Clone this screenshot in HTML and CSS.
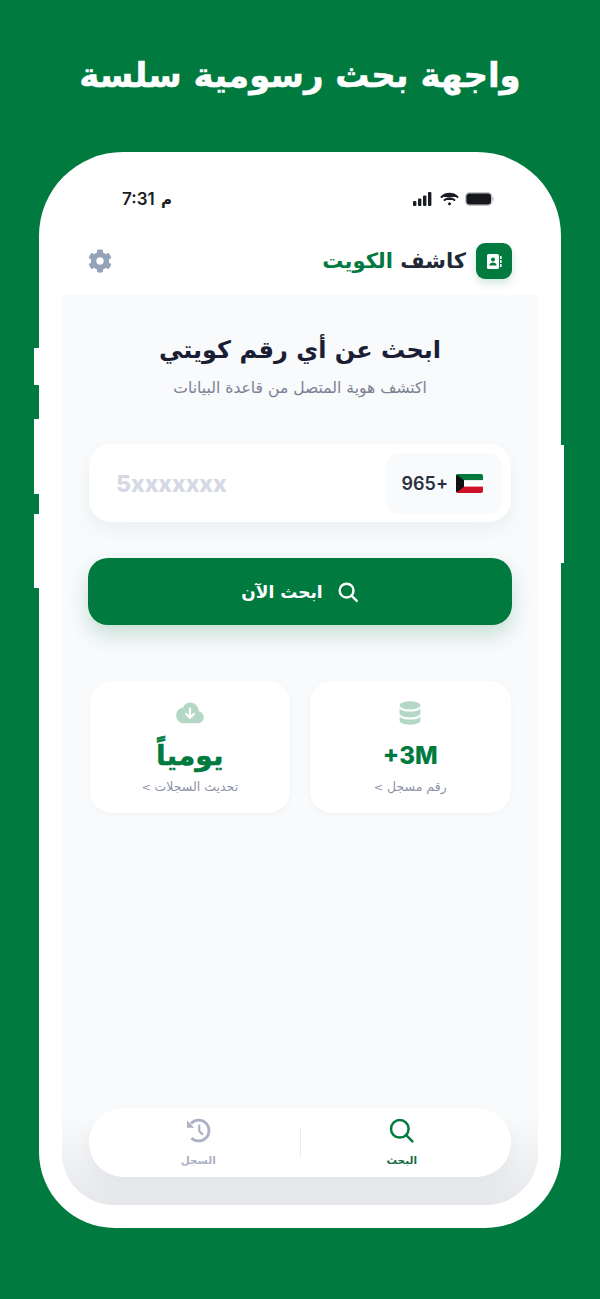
FILE: index.html
```html
<!DOCTYPE html>
<html lang="ar" dir="rtl">
<head>
    <meta charset="utf-8">
    <meta name="viewport" content="width=device-width, initial-scale=1.0">
    <title>كاشف الكويت</title>
    <link rel="stylesheet" href="styles.css">
</head>
<body>
    <h1 class="promo">واجهة بحث رسومية سلسة</h1>

    <div class="phone">
        <span class="side-btn btn-a"></span>
        <span class="side-btn btn-b"></span>
        <span class="side-btn btn-c"></span>
        <span class="side-btn btn-d"></span>

        <div class="status-bar" dir="ltr">
            <span class="time">7:31 <span class="ampm">م</span></span>
            <div class="status-icons">
                <svg width="22" height="14" viewBox="0 0 22 14"><rect x="1" y="9" width="3.4" height="5" rx="1"/><rect x="6" y="6.5" width="3.4" height="7.5" rx="1"/><rect x="11" y="3.5" width="3.4" height="10.5" rx="1"/><rect x="16" y="0" width="3.4" height="14" rx="1"/></svg>
                <svg width="19" height="14" viewBox="0 0 19 14" fill="none" stroke="#1a1d24" stroke-width="2" stroke-linecap="round"><path d="M1.5 5C6 .8 13 .8 17.5 5"/><path d="M4.6 8C7.5 5.5 11.5 5.5 14.4 8"/><circle cx="9.5" cy="11.8" r="1.1" fill="#1a1d24" stroke-width="1"/></svg>
                <svg width="29" height="14" viewBox="0 0 29 14"><rect x=".7" y=".7" width="26" height="12.600" rx="4" fill="#16181d" stroke="#c4c6ca" stroke-width="1.400"/><rect x="27.400" y="5" width="1.400" height="4" rx=".7" fill="#c4c6ca"/></svg>
            </div>
        </div>

        <header class="app-header">
            <div class="brand">
                <span class="brand-icon">
                    <svg width="16" height="17" viewBox="0 0 16 17"><rect x="1" y="1" width="12" height="15" rx="1.6" fill="#fff"/><rect x="14" y="3" width="1.6" height="3" fill="#fff"/><rect x="14" y="7" width="1.6" height="3" fill="#fff"/><rect x="14" y="11" width="1.6" height="3" fill="#fff"/><circle cx="7" cy="6.6" r="2" fill="#007a3f"/><path d="M3.4 12.6c0-2 1.6-3 3.6-3s3.6 1 3.6 3z" fill="#007a3f"/></svg>
                </span>
                <span class="brand-name">كاشف <span class="green">الكويت</span></span>
            </div>
            <svg class="gear" width="24" height="24" viewBox="0 0 512 512"><path d="M487.4 315.7l-42.6-24.6c4.3-23.2 4.3-47 0-70.2l42.6-24.6c4.9-2.8 7.1-8.6 5.5-14-11.1-35.6-30-67.8-54.7-94.6-3.8-4.1-10-5.1-14.8-2.3L380.8 110c-17.9-15.4-38.5-27.3-60.8-35.1V25.8c0-5.6-3.9-10.5-9.4-11.7-36.7-8.2-74.3-7.8-109.2 0-5.5 1.2-9.4 6.1-9.4 11.7V75c-22.2 7.9-42.8 19.8-60.8 35.1L88.7 85.5c-4.9-2.8-11-1.9-14.8 2.3-24.7 26.7-43.6 58.9-54.7 94.6-1.7 5.4.6 11.2 5.5 14L67.3 221c-4.3 23.2-4.3 47 0 70.2l-42.6 24.6c-4.9 2.8-7.1 8.6-5.5 14 11.1 35.6 30 67.8 54.7 94.6 3.8 4.1 10 5.1 14.8 2.3l42.6-24.6c17.9 15.4 38.5 27.3 60.8 35.1v49.2c0 5.6 3.9 10.5 9.4 11.7 36.7 8.2 74.3 7.8 109.2 0 5.5-1.2 9.4-6.1 9.4-11.7v-49.2c22.2-7.9 42.8-19.8 60.8-35.1l42.6 24.6c4.9 2.8 11 1.9 14.8-2.3 24.7-26.7 43.6-58.9 54.7-94.6 1.5-5.5-.7-11.3-5.6-14.1zM256 336c-44.1 0-80-35.9-80-80s35.9-80 80-80 80 35.9 80 80-35.9 80-80 80z"/></svg>
        </header>

        <main class="screen">
            <h2 class="title">ابحث عن أي رقم كويتي</h2>
            <p class="subtitle">اكتشف هوية المتصل من قاعدة البيانات</p>

            <div class="search-box">
                <div class="code-chip">
                    <svg class="flag" width="27" height="19" viewBox="0 0 27 19">
                        <rect width="27" height="6.4" fill="#007a3d"/>
                        <rect y="6.3" width="27" height="6.4" fill="#fff"/>
                        <rect y="12.6" width="27" height="6.4" fill="#ce1126"/>
                        <path d="M0 0l8 6.3v6.4L0 19z" fill="#111"/>
                    </svg>
                    <span class="code">965+</span>
                </div>
                <span class="placeholder" dir="ltr">5xxxxxxx</span>
            </div>

            <button class="search-btn">
                <svg width="22" height="22" viewBox="0 0 22 22" fill="none" stroke="#fff" stroke-width="2.4" stroke-linecap="round"><circle cx="9.6" cy="9.6" r="6.9"/><path d="M14.8 14.8l5 5"/></svg>
                <span>ابحث الآن</span>
            </button>

            <div class="stats">
                <div class="stat">
                    <svg class="stat-icon" width="22" height="24" viewBox="0 0 22 24"><ellipse cx="11" cy="4.4" rx="10.4" ry="4.2"/><path d="M.6 7.4C2.4 9.800 6.800 10.600 11 10.600s8.600-.8 10.400-3.200v4.800c0 2.300-4.600 4.200-10.400 4.200S.6 14.500.6 12.200z"/><path d="M.6 15.400c1.800 2.400 6.200 3.200 10.400 3.200s8.600-.8 10.400-3.200v4.200c0 2.300-4.600 4.200-10.400 4.200S.6 21.900.6 19.600z"/></svg>
                    <div class="stat-value latin" dir="ltr">+3M</div>
                    <div class="stat-label">رقم مسجل <span class="chev">&gt;</span></div>
                </div>
                <div class="stat">
                    <svg class="stat-icon" width="28" height="22" viewBox="0 0 28 22"><path d="M22.800 9.200C22.400 4.200 18.800.6 14.400.6c-3.400 0-6.300 2-7.600 5.200C3 6.300.2 9.400.2 13.400c0 4.400 3.400 7.800 7.800 7.800h14c3.300 0 5.800-2.600 5.800-5.900 0-3-2.200-5.500-5-6.100z"/><path d="M14 6.500v9M10.200 12l3.800 3.900 3.800-3.900" fill="none" stroke="#fff" stroke-width="2.200" stroke-linecap="round" stroke-linejoin="round"/></svg>
                    <div class="stat-value">يومياً</div>
                    <div class="stat-label">تحديث السجلات <span class="chev">&gt;</span></div>
                </div>
            </div>

            <nav class="bottom-nav">
                <a class="nav-item active" href="#">
                    <svg width="25" height="25" viewBox="0 0 25 25" fill="none" stroke="#007a3f" stroke-width="2.500" stroke-linecap="round"><circle cx="10.800" cy="10.800" r="8.800"/><path d="M17.400 17.400l6 6"/></svg>
                    <span>البحث</span>
                </a>
                <span class="nav-divider"></span>
                <a class="nav-item" href="#">
                    <svg width="25" height="25" viewBox="0 0 25 25" fill="none" stroke="#aeb0c6" stroke-width="2.800"><path d="M5 5.500A10.400 10.400 0 1 1 5.400 20"/><path d="M1 2.500v7.200h7.200z" fill="#aeb0c6" stroke="none"/><path d="M13.200 7.500v5.600l3.200 3" stroke-width="2.200" stroke-linecap="round"/></svg>
                    <span>السجل</span>
                </a>
            </nav>
        </main>
    </div>
</body>
</html>
```

FILE: styles.css
```css
* {
    box-sizing: border-box;
}

body {
    margin: 0;
    height: 1299px;
    overflow: hidden;
    background-color: #007a3f;
    font-family: "DejaVu Sans", "Noto Sans", sans-serif;
}

.promo {
    margin: 0;
    height: 152px;
    padding-top: 47px;
    text-align: center;
    color: #fff;
    font-size: 34px;
    line-height: 56px;
    font-weight: bold;
    -webkit-text-stroke: 0.5px #fff;
}

/* phone frame */
.phone {
    position: relative;
    width: 522px;
    height: 1076px;
    margin: 0 auto;
    padding: 0 23px 23px;
    display: flex;
    flex-direction: column;
    background-color: #fff;
    border-radius: 84px 84px 76px 76px;
}

.side-btn {
    position: absolute;
    width: 6px;
    background-color: #fff;
}

.btn-a { left: -5px; top: 196px; height: 37px; }
.btn-b { left: -5px; top: 267px; height: 75px; }
.btn-c { left: -5px; top: 362px; height: 74px; }
.btn-d { right: -3px; top: 293px; height: 118px; }

.status-bar {
    height: 91px;
    padding: 2px 44px 0 60px;
    display: flex;
    justify-content: space-between;
    align-items: center;
    flex-shrink: 0;
}

.time {
    font-family: "Inter", "DejaVu Sans", sans-serif;
    font-size: 17px;
    font-weight: 600;
    color: #1a1d24;
}

.ampm {
    font-family: "DejaVu Sans", sans-serif;
    font-size: 15px;
    margin-left: 2px;
}

.status-icons {
    display: flex;
    align-items: center;
    gap: 6px;
}

.status-icons svg {
    fill: #1a1d24;
}

.app-header {
    height: 52px;
    padding: 0 26px;
    display: flex;
    justify-content: space-between;
    align-items: flex-start;
    flex-shrink: 0;
}

.brand {
    display: flex;
    align-items: center;
    gap: 10px;
}

.brand-icon {
    width: 36px;
    height: 36px;
    display: flex;
    align-items: center;
    justify-content: center;
    background-color: #007a3f;
    border-radius: 9px;
    box-shadow: 0 4px 8px rgba(0, 122, 63, 0.18);
}

.brand-name {
    font-size: 21px;
    font-weight: bold;
    color: #1f2937;
}

.green {
    color: #007a3f;
}

.gear {
    fill: #94a3b8;
    margin-top: 6px;
}

/* main screen */
.screen {
    flex: 1;
    display: flex;
    flex-direction: column;
    align-items: center;
    background: linear-gradient(to bottom, #f8fafc 0, #f8fafc 820px, #e6e7ea 100%);
    border-radius: 0 0 52px 52px;
}

.title {
    margin: 35px 0 0;
    font-size: 24px;
    line-height: 40px;
    font-weight: bold;
    color: #1a1d33;
}

.subtitle {
    margin: 9px 0 0;
    font-size: 15.6px;
    line-height: 18px;
    color: #7c8293;
}

.search-box {
    width: 422px;
    height: 78px;
    margin-top: 47px;
    padding: 9px 9px 8px 27px;
    display: flex;
    align-items: center;
    justify-content: space-between;
    background-color: #fff;
    border-radius: 22px;
    box-shadow: 0 8px 18px rgba(0, 60, 40, 0.05);
}

.code-chip {
    width: 116px;
    height: 61px;
    padding: 0 19px 0 0;
    display: flex;
    align-items: center;
    gap: 8px;
    background-color: #f8fafc;
    border-radius: 14px;
}

.flag {
    flex-shrink: 0;
    border-radius: 2px;
}

.code {
    font-family: "Inter", sans-serif;
    font-size: 18px;
    font-weight: 600;
    color: #2b3040;
    direction: ltr;
}

.placeholder {
    font-family: "Inter", sans-serif;
    font-size: 23px;
    font-weight: 800;
    color: #d5d9e5;
}

.search-btn {
    width: 424px;
    height: 67px;
    margin-top: 36px;
    display: flex;
    align-items: center;
    justify-content: center;
    gap: 14px;
    border: none;
    color: #fff;
    background-color: #007a3f;
    border-radius: 20px;
    font-family: inherit;
    font-size: 17px;
    font-weight: bold;
    box-shadow: 0 10px 20px rgba(0, 122, 63, 0.2);
}

.stats {
    width: 421px;
    margin-top: 56px;
    display: flex;
    gap: 20px;
}

.stat {
    width: 200.500px;
    height: 132px;
    padding-top: 20px;
    display: flex;
    flex-direction: column;
    align-items: center;
    background-color: #fff;
    border-radius: 22px;
    box-shadow: 0 2px 6px rgba(0, 0, 0, 0.03);
}

.stat-icon {
    height: 24px;
    fill: #b5d8c6;
}

.stat-value {
    height: 36px;
    margin-top: 13px;
    font-size: 28px;
    line-height: 36px;
    font-weight: bold;
    color: #007a3f;
    -webkit-text-stroke: 0.5px #007a3f;
}

.stat-value.latin {
    font-family: "Inter", sans-serif;
    font-size: 24px;
    font-weight: 800;
    -webkit-text-stroke: 0;
}

.stat-label {
    margin-top: 4px;
    font-size: 12.5px;
    line-height: 18px;
    color: #8f92a8;
}

.chev {
    font-size: 11px;
}

.bottom-nav {
    width: 422px;
    height: 69px;
    margin-top: auto;
    margin-bottom: 28px;
    padding: 0 8px;
    display: flex;
    align-items: center;
    background-color: #fff;
    border-radius: 35px;
    box-shadow: 0 8px 20px rgba(0, 0, 0, 0.04);
}

.nav-item {
    flex: 1;
    display: flex;
    flex-direction: column;
    align-items: center;
    gap: 10px;
    text-decoration: none;
    font-size: 10.5px;
    line-height: 14px;
    font-weight: bold;
    color: #aeb0c6;
}

.nav-item.active {
    color: #1d6b48;
}

.nav-divider {
    width: 1px;
    height: 28px;
    background-color: #e8eaee;
}
```
